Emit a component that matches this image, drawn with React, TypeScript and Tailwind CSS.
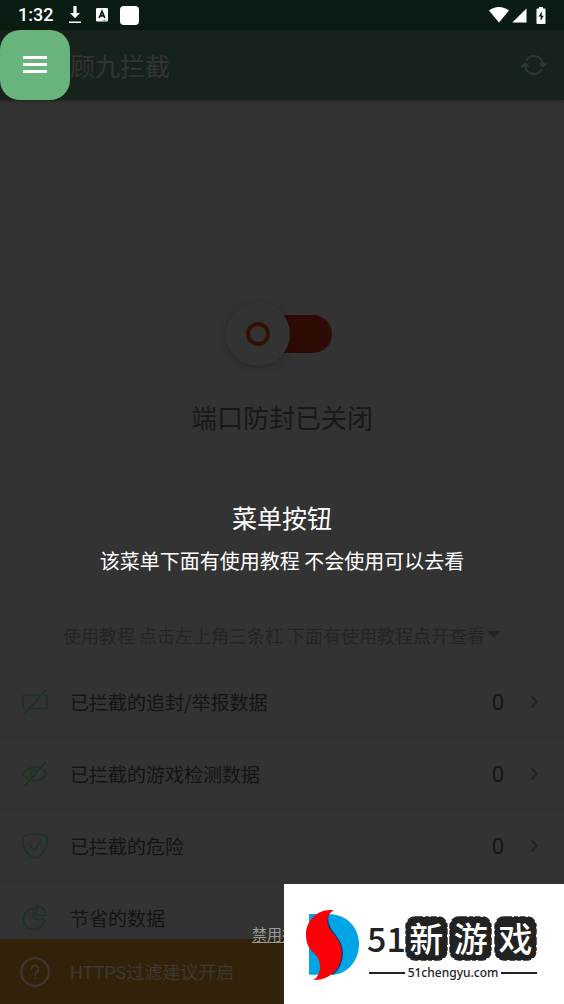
import type { ReactNode } from "react";

const stroke = {
  fill: "none",
  stroke: "currentColor",
  strokeWidth: 2,
  strokeLinecap: "round" as const,
  strokeLinejoin: "round" as const,
};

function StatusBar() {
  return (
    <div className="flex h-[30px] items-center bg-[#0b1c12] pr-[18px] pl-[18px] text-white">
      <span className="font-['Roboto',sans-serif] text-[18px] leading-[30px] font-medium">1:32</span>
      <svg className="ml-[15px]" width="14" height="18" viewBox="0 0 14 18" fill="#fff" aria-hidden="true">
        <path d="M5.4 0h3.2v7H12l-5 5.2L2 7h3.4zM1 15.4h12v1.6H1z" />
      </svg>
      <svg className="ml-3.5" width="12" height="14" viewBox="0 0 12 14" aria-hidden="true">
        <rect width="12" height="13.5" rx="1.2" fill="#fff" />
        <path d="M3.2 10 6 3.2 8.8 10M4.2 7.8h3.6" fill="none" stroke="#0b1c12" strokeWidth="1.7" />
        <path d="M6.5 12.2h4" stroke="#0b1c12" strokeWidth=".7" strokeDasharray="1 .6" />
      </svg>
      <span className="ml-3 size-[19px] rounded-[4px] bg-white" />
      <div className="ml-auto flex items-center">
        <svg width="20" height="16" viewBox="0 0 20 16" fill="#fff" aria-hidden="true">
          <path d="M0 3.6C5.6-1.2 14.4-1.2 20 3.6L10 15.5z" />
        </svg>
        <svg className="ml-[3px]" width="15" height="15" viewBox="0 0 15 15" fill="#fff" aria-hidden="true">
          <path d="M14.5.5v14H.3z" />
        </svg>
        <svg className="ml-[9px]" width="10" height="17" viewBox="0 0 10 17" aria-hidden="true">
          <path d="M3 0h4v1.6h1.6q.9 0 .9.9V16q0 1-.9 1H1.4q-.9 0-.9-1V2.5q0-.9.9-.9H3z" fill="#fff" />
          <path d="M5.8 4.5 2.5 9.6h2.2V14l3-5.2H5.8z" fill="#0b1c12" />
        </svg>
      </div>
    </div>
  );
}

function AppBar() {
  return (
    <header className="flex h-[70px] items-center bg-[#15231a] text-[#343434] shadow-[0_1px_3px_rgba(0,0,0,0.35)]">
      <button aria-label="菜单" className="flex size-[70px] items-center justify-center rounded-[20px] bg-[#69b37c]">
        <svg width="24" height="18" viewBox="0 0 24 18" fill="#fff" aria-hidden="true">
          <path d="M0 0h24v3H0zM0 7h24v3H0zM0 14h24v3H0z" />
        </svg>
      </button>
      <h1 className="text-[25px] leading-9">顾九拦截</h1>
      <button aria-label="刷新" className="mr-[17px] ml-auto">
        <svg width="26" height="24" viewBox="0 0 26 24" {...stroke} aria-hidden="true">
          <path d="M5.6 7A9 9 0 0 1 22 12v1M19 10.5l3 3 3-3M20.4 17A9 9 0 0 1 4 12v-1M1 13.5l3-3 3 3" />
        </svg>
      </button>
    </header>
  );
}

const BlockedIcon = (
  <svg width="26" height="26" viewBox="0 0 26 26" {...stroke} strokeWidth={1.7} aria-hidden="true">
    <path d="M17.5 6H3Q1 6 1 8v9.5q0 2 2 2h1.5M21.5 6H23q2 0 2 2v9.5q0 2-2 2H9.5M23.5 1.5 2.5 24.5" />
  </svg>
);

const EyeOffIcon = (
  <svg width="26" height="26" viewBox="0 0 26 26" {...stroke} strokeWidth={1.7} aria-hidden="true">
    <path d="M17 6.8C11 4.8 5 8 1 13c1.3 1.7 2.8 3.2 4.5 4.3M20.5 8.8c1.7 1.1 3.2 2.5 4.5 4.2-4 5-9 7.5-14.2 6.5M9.5 14.8a3.8 3.8 0 0 1 5-5.2M23.5 1.2 3 24.8" />
  </svg>
);

const ShieldIcon = (
  <svg width="26" height="26" viewBox="0 0 26 26" {...stroke} strokeWidth={1.7} aria-hidden="true">
    <path d="M13 1c4.5 0 8.5.7 12 2.5V9c0 7.5-5 13-12 16.5C6 22 1 16.5 1 9V3.5C4.5 1.7 8.5 1 13 1zM7.5 11.8l5 5 6.5-9" />
  </svg>
);

const PieIcon = (
  <svg width="26" height="26" viewBox="0 0 26 26" {...stroke} strokeWidth={1.7} aria-hidden="true">
    <path d="M11.5 3.5A10.5 10.5 0 1 0 22.3 14H11.5zM14.5 1v9.5H24C24 5 20 1 14.5 1z" />
  </svg>
);

const rows: { icon: ReactNode; label: string; value?: number }[] = [
  { icon: BlockedIcon, label: "已拦截的追封/举报数据", value: 0 },
  { icon: EyeOffIcon, label: "已拦截的游戏检测数据", value: 0 },
  { icon: ShieldIcon, label: "已拦截的危险", value: 0 },
  { icon: PieIcon, label: "节省的数据" },
];

function StatRow({ icon, label, value }: { icon: ReactNode; label: string; value?: number }) {
  return (
    <li className="border-b border-[#2f2f2f]">
      <a href="#details" className="flex h-[71px] items-center pr-[25px] pl-[22px] text-[#141414]">
        <span className="text-[#1b3322]">{icon}</span>
        <span className="ml-[22px] text-[19px] leading-7">{label}</span>
        {value !== undefined && (
          <>
            <span className="ml-auto pt-0.5 font-['Roboto',sans-serif] text-[22px] leading-7">{value}</span>
            <svg className="ml-[26px] text-[#1f1f1f]" width="9" height="14" viewBox="0 0 9 14" {...stroke} strokeWidth={1.5} aria-hidden="true">
              <path d="M1.5 1.5 7 7l-5.5 5.5" />
            </svg>
          </>
        )}
      </a>
    </li>
  );
}

function PowerSwitch() {
  return (
    <button role="switch" aria-checked="false" aria-label="端口防封" className="mr-1.5 flex h-16 w-[106px] items-center">
      <span className="z-10 flex size-16 shrink-0 items-center justify-center rounded-full bg-[#333333] shadow-[0_2px_7px_rgba(0,0,0,0.25)]">
        <span className="size-6 rounded-full border-4 border-[#331100]" />
      </span>
      <span className="-ml-8 h-[38px] flex-1 rounded-r-full bg-[#2e0c05]" />
    </button>
  );
}

function SealGlyph({ char }: { char: string }) {
  return (
    <span className="relative flex h-[45px] w-[43px] items-center justify-center">
      <svg className="absolute inset-0" width="43" height="45" viewBox="0 0 43 45" fill="#222" aria-hidden="true">
        <rect x="1" y="1" width="41" height="43" rx="9" stroke="#222" strokeWidth="1.4" strokeDasharray="8 2 4 1.5 6 2.5" />
      </svg>
      <span className="relative text-[34px] leading-[44px] font-medium text-white">{char}</span>
    </span>
  );
}

function SiteBadge() {
  return (
    <aside className="absolute right-0 bottom-0 z-30 flex h-[120px] w-[280px] items-center bg-white pl-[20px] text-[#222]">
      <svg className="shrink-0" width="57" height="73" viewBox="60 85 171 219" aria-hidden="true">
        <path d="M75 103h59c55 0 91 42 91 91s-35 91-80 91H75z" fill="#00a5e5" />
        <path d="M134 105c-10 48 43 62 43 115 0 29-12 51-30 65l-22-10V105z" fill="#073f7c" />
        <path d="M150 92C105 85 66 120 66 165c0 58 42 50 42 95 0 20-8 35-20 41 50 2 85-35 85-80 0-54-43-60-43-96 0-17 9-27 20-33z" fill="#fb0006" />
      </svg>
      <div className="ml-[6px] flex w-[170px] flex-col pt-2">
        <div className="flex items-center justify-between">
          <span className="w-[36px] text-[34px] leading-[44px] font-medium">51</span>
          <SealGlyph char="新" />
          <SealGlyph char="游" />
          <SealGlyph char="戏" />
        </div>
        <div className="mt-1 flex items-center gap-[3px] pl-0.5">
          <span className="h-0.5 flex-1 bg-[#222]" />
          <span className="font-['Noto_Sans',sans-serif] text-[12px] leading-4 font-medium">51chengyu.com</span>
          <span className="h-0.5 flex-1 bg-[#222]" />
        </div>
      </div>
    </aside>
  );
}

export default function App() {
  return (
    <div className="relative flex h-screen flex-col overflow-hidden bg-[#333333] font-['Noto_Sans_CJK_SC',sans-serif]">
      <StatusBar />
      <AppBar />
      <main className="flex flex-col">
        <section className="flex flex-col items-center pt-[202px]">
          <PowerSwitch />
          <p className="mt-[31px] text-[26px] leading-10 text-[#181818]">端口防封已关闭</p>
          <button className="mt-[184px] flex items-center gap-0.5 text-[18px] leading-7 whitespace-nowrap text-[#242424]">
            使用教程 点击左上角三条杠 下面有使用教程点开查看
            <svg width="14" height="8" viewBox="0 0 14 8" fill="currentColor" aria-hidden="true">
              <path d="M0 0h14L7 7z" />
            </svg>
          </button>
        </section>
        <ul className="mt-[17px]">
          {rows.map((row) => (
            <StatRow key={row.label} {...row} />
          ))}
        </ul>
      </main>

      <a href="#https" className="absolute inset-x-0 bottom-0 flex h-[65px] items-center bg-[#33220a] pl-5 text-[#3c3933]">
        <svg width="30" height="30" viewBox="0 0 30 30" {...stroke} aria-hidden="true">
          <circle cx="15" cy="15" r="13.7" />
          <path d="M11.5 12a3.5 3.5 0 1 1 5.5 2.8c-1.5 1-2 1.7-2 3.2M15 21v.2" strokeWidth="1.7" />
        </svg>
        <span className="ml-5 text-[18px] leading-7"><span className="font-['Roboto',sans-serif]">HTTPS</span>过滤建议开启</span>
      </a>

      <div role="dialog" aria-label="菜单按钮" className="absolute inset-x-0 top-[497px] z-20 flex flex-col items-center text-white">
        <h2 className="text-[25px] leading-10">菜单按钮</h2>
        <p className="mt-2 text-[20px] leading-8">该菜单下面有使用教程 不会使用可以去看</p>
      </div>
      <div className="absolute inset-x-0 bottom-[58px] z-20 flex justify-center">
        <button className="text-[15px] leading-6 text-[#999] underline underline-offset-2">禁用提示</button>
      </div>
      <SiteBadge />
    </div>
  );
}
